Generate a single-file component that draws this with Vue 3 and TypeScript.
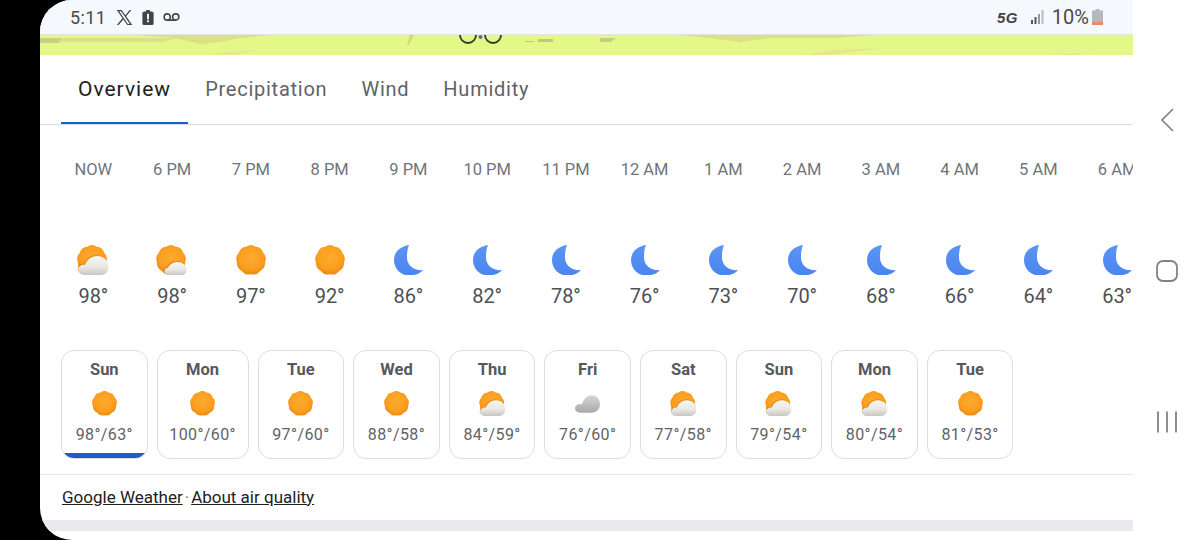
<script setup lang="ts">
interface Hour {
  label: string
  icon: string
  temp: number
}

interface Day {
  name: string
  icon: string
  range: string
}

const tabs = ['Overview', 'Precipitation', 'Wind', 'Humidity']

const hours: Hour[] = [
  { label: 'NOW', icon: 'sun-cloud', temp: 98 },
  { label: '6 PM', icon: 'sun-puff', temp: 98 },
  { label: '7 PM', icon: 'sun', temp: 97 },
  { label: '8 PM', icon: 'sun', temp: 92 },
  { label: '9 PM', icon: 'moon', temp: 86 },
  { label: '10 PM', icon: 'moon', temp: 82 },
  { label: '11 PM', icon: 'moon', temp: 78 },
  { label: '12 AM', icon: 'moon', temp: 76 },
  { label: '1 AM', icon: 'moon', temp: 73 },
  { label: '2 AM', icon: 'moon', temp: 70 },
  { label: '3 AM', icon: 'moon', temp: 68 },
  { label: '4 AM', icon: 'moon', temp: 66 },
  { label: '5 AM', icon: 'moon', temp: 64 },
  { label: '6 AM', icon: 'moon', temp: 63 },
]

const days: Day[] = [
  { name: 'Sun', icon: 'sun', range: '98°/63°' },
  { name: 'Mon', icon: 'sun', range: '100°/60°' },
  { name: 'Tue', icon: 'sun', range: '97°/60°' },
  { name: 'Wed', icon: 'sun', range: '88°/58°' },
  { name: 'Thu', icon: 'sun-cloud', range: '84°/59°' },
  { name: 'Fri', icon: 'cloud', range: '76°/60°' },
  { name: 'Sat', icon: 'sun-cloud', range: '77°/58°' },
  { name: 'Sun', icon: 'sun-cloud', range: '79°/54°' },
  { name: 'Mon', icon: 'sun-cloud', range: '80°/54°' },
  { name: 'Tue', icon: 'sun', range: '81°/53°' },
]

// scalloped disc used by every sun icon, soft lobes around (15,15)
function scallop(lobes: number, tip: number, valley: number): string {
  const step = (Math.PI * 2) / lobes
  const at = (r: number, a: number) =>
    `${(15 + r * Math.cos(a)).toFixed(2)} ${(15 + r * Math.sin(a)).toFixed(2)}`
  let d = `M${at(valley, -Math.PI / 2 - step / 2)}`
  for (let i = 0; i < lobes; i++) {
    const a = -Math.PI / 2 + i * step
    d += `Q${at(tip, a)} ${at(valley, a + step / 2)}`
  }
  return d + 'Z'
}

const sunPath = scallop(9, 16.6, 14.2)

const bigCloud =
  'M7 30C3.500 30 1.500 27.500 1.500 24.800C1.500 21.800 3.800 19.800 6.500 19.800C7 19.800 7.500 19.900 8 20C9.500 15 14 11 20.500 11C26.500 11 31.500 15.500 31.500 22C31.500 26.500 28.500 30 24 30Z'
const smallCloud =
  'M12.500 30C10 30 8.500 28.200 8.500 26.300C8.500 24.300 10 22.800 12 22.800C13.500 19.500 17 17 21.500 17C26.500 17 30.500 20.500 30.500 25C30.500 28 28.500 30 25.500 30Z'
</script>

<template>
  <div class="device">
    <svg class="defs" aria-hidden="true">
      <defs>
        <radialGradient id="sun-fill" cx="50%" cy="42%" r="60%">
          <stop offset="0%" stop-color="#fdab2e" />
          <stop offset="70%" stop-color="#fb9d1e" />
          <stop offset="100%" stop-color="#ec880c" />
        </radialGradient>
        <linearGradient id="cloud-fill" x1="0" y1="0" x2="0" y2="1">
          <stop offset="0%" stop-color="#f8f7f4" />
          <stop offset="60%" stop-color="#e9e7e3" />
          <stop offset="100%" stop-color="#c8c6c1" />
        </linearGradient>
        <linearGradient id="grey-fill" x1="0" y1="0" x2="0" y2="1">
          <stop offset="0%" stop-color="#d6d6d6" />
          <stop offset="100%" stop-color="#a9a9a9" />
        </linearGradient>
        <linearGradient id="moon-fill" x1="0" y1="0" x2="0" y2="1">
          <stop offset="0%" stop-color="#5b95f5" />
          <stop offset="100%" stop-color="#4a84f0" />
        </linearGradient>
        <symbol id="sun" viewBox="-1 0 32 30">
          <path :d="sunPath" fill="url(#sun-fill)" />
        </symbol>
        <symbol id="sun-cloud" viewBox="0 0 32 30">
          <path :d="sunPath" fill="url(#sun-fill)" />
          <path :d="bigCloud" fill="#c96f00" opacity=".45" transform="translate(-1 -1)" />
          <path :d="bigCloud" fill="url(#cloud-fill)" />
        </symbol>
        <symbol id="sun-puff" viewBox="0 0 32 30">
          <path :d="sunPath" fill="url(#sun-fill)" />
          <path :d="smallCloud" fill="#c96f00" opacity=".45" transform="translate(-1 -1)" />
          <path :d="smallCloud" fill="url(#cloud-fill)" />
        </symbol>
        <symbol id="cloud" viewBox="0 0 32 30">
          <path
            d="M7 26C3.500 26 1 23.500 1 20.500C1 17.500 3.500 15.500 7 15.500C8 15.500 9 15.600 9.500 15.800C11 10 15 5 21 5C27 5 31 10 31 15.500C31 21.500 27 26 21 26Z"
            fill="url(#grey-fill)"
          />
        </symbol>
        <symbol id="moon" viewBox="0 0 32 30">
          <path
            d="M17 0C8 1.500 2 7 2 15C2 24 9 30.500 17.500 30.500C23 30.500 28 28.500 31 25C23 26 15 21 15 12.500C15 7.500 15.500 3.500 17 0Z"
            fill="url(#moon-fill)"
          />
        </symbol>
      </defs>
    </svg>

    <div class="screen">
      <main class="content">
        <header class="status">
          <div class="status-left">
            <span class="clock">5:11</span>
            <svg class="st-x" viewBox="0 0 24 24">
              <path
                d="M1 1.500h7l5.200 7.200 6-7.200h2.500l-7.400 8.800L23 22.500h-7l-5.700-7.800-6.600 7.800H1.200l7.900-9.400ZM4.400 3l12.400 18h2.900L7.200 3Z"
                fill="#444"
                fill-rule="evenodd"
              />
            </svg>
            <svg class="st-alert" viewBox="0 0 12 16">
              <path d="M4 0h4v1.500h2a2 2 0 0 1 2 2V14a2 2 0 0 1-2 2H2a2 2 0 0 1-2-2V3.500a2 2 0 0 1 2-2h2Z" fill="#444" />
              <rect x="5" y="4" width="2" height="6" fill="#f5f8fd" />
              <rect x="5" y="11" width="2" height="2" fill="#f5f8fd" />
            </svg>
            <svg class="st-vm" viewBox="0 0 18 10">
              <circle cx="4.500" cy="5" r="3.300" fill="none" stroke="#444" stroke-width="1.700" />
              <circle cx="13.500" cy="5" r="3.300" fill="none" stroke="#444" stroke-width="1.700" />
              <path d="M4.500 8.300h9" stroke="#444" stroke-width="1.700" />
            </svg>
          </div>
          <div class="status-right">
            <span class="net">5G</span>
            <svg class="st-signal" viewBox="0 0 14 14">
              <rect x="0" y="10" width="2" height="4" fill="#555" />
              <rect x="3.500" y="7" width="2" height="7" fill="#555" />
              <rect x="7" y="4" width="2" height="10" fill="#999" />
              <rect x="10.500" y="0" width="2" height="14" fill="#bbb" />
            </svg>
            <span class="pct">10%</span>
            <svg class="st-batt" viewBox="0 0 11 16">
              <path d="M3.500 0h4v1.500H11V16H0V1.500h3.500Z" fill="#b6b8bb" />
              <rect x="0" y="13" width="11" height="3" fill="#ec8a68" />
            </svg>
          </div>
        </header>

        <div class="banner">
          <svg class="banner-art" viewBox="0 0 1093 20" preserveAspectRatio="none">
            <path d="M0 3h22l-3 5H0Z" fill="#b3b377" opacity=".55" />
            <path d="M22 3h115l-15 4H18Z" fill="#d4d78a" opacity=".7" />
            <path d="M95 0h135l-30 3-20 4-20 2-25-6Z" fill="#d5d184" opacity=".65" />
            <path d="M170 19l48-4-25 5Z" fill="#eed58a" opacity=".6" />
            <path d="M370 0h4l-5 10h-2Z" fill="#c2c27e" opacity=".6" />
            <path d="M485 6h9v1h-9ZM498 4h15v3h-15Z" fill="#b9b978" opacity=".8" />
            <path d="M640 0H835l-40 3H730L700 7 670 3Z" fill="#d5d184" opacity=".65" />
            <path d="M560 3h16l-5 4h-11Z" fill="#b3b377" opacity=".6" />
            <path d="M765 20l28-5 50-2-30 4-25 3Z" fill="#eed58a" opacity=".55" />
            <path d="M1010 20l30-2 18-4-22 6Z" fill="#eed58a" opacity=".55" />
            <path d="M420 0a8 8 0 0 0 16 0" fill="none" stroke="#2d3a2e" stroke-width="1.800" />
            <path d="M445 0a8 8 0 0 0 16 0" fill="none" stroke="#2d3a2e" stroke-width="1.800" />
            <circle cx="440.500" cy="2" r="2" fill="#54708a" />
          </svg>
        </div>

        <nav class="tabs">
          <div
            v-for="(tab, i) in tabs"
            :key="tab"
            class="tab"
            :class="{ active: i === 0 }"
          >
            {{ tab }}
          </div>
        </nav>

        <section class="hours">
          <div v-for="h in hours" :key="h.label" class="hour">
            <span class="hour-label">{{ h.label }}</span>
            <svg class="hour-icon"><use :href="'#' + h.icon" /></svg>
            <span class="hour-temp">{{ h.temp }}°</span>
          </div>
        </section>

        <section class="days">
          <div
            v-for="(d, i) in days"
            :key="i"
            class="day"
            :class="{ wide: d.range.length > 7 }"
          >
            <span class="day-name">{{ d.name }}</span>
            <svg class="day-icon"><use :href="'#' + d.icon" /></svg>
            <span class="day-range">{{ d.range }}</span>
            <span v-if="i === 0" class="day-bar"></span>
          </div>
        </section>

        <footer class="foot">
          <a class="link">Google Weather</a>
          <span class="sep">·</span>
          <a class="link">About air quality</a>
        </footer>
        <div class="band"></div>
      </main>

      <aside class="softkeys">
        <svg class="key" viewBox="0 0 24 24">
          <path d="M18 1 7 12l11 11" fill="none" stroke="#828282" stroke-width="1.700" />
        </svg>
        <svg class="key" viewBox="0 0 24 24">
          <rect x="2" y="2" width="20" height="20" rx="6" fill="none" stroke="#828282" stroke-width="1.800" />
        </svg>
        <svg class="key" viewBox="0 0 24 24">
          <path d="M3 1.500v21M12 1.500v21M21 1.500v21" fill="none" stroke="#828282" stroke-width="1.800" />
        </svg>
      </aside>
    </div>
  </div>
</template>

<style>
html,
body {
  margin: 0;
  background: #000;
}
</style>

<style scoped>
.device {
  width: 1200px;
  height: 540px;
  overflow: hidden;
  background: #000;
  font-family: Roboto, 'Liberation Sans', sans-serif;
  color: #444;
}

.defs {
  position: absolute;
  width: 0;
  height: 0;
}

.screen {
  display: flex;
  height: 540px;
  margin-left: 40px;
  overflow: hidden;
  background: #fff;
  border-radius: 32px 0 0 32px;
}

.content {
  flex: 0 0 1093px;
  width: 1093px;
  display: flex;
  flex-direction: column;
  overflow: hidden;
}

.status {
  flex: 0 0 34px;
  display: flex;
  align-items: center;
  justify-content: space-between;
  padding: 0 30px 0 30px;
  background: #f5f8fd;
  border-bottom: 1px solid #e2e4e4;
}

.status-left,
.status-right {
  display: flex;
  align-items: center;
}

.clock {
  font-size: 18px;
  letter-spacing: 0.4px;
  color: #4a4a4a;
}

.st-x {
  width: 17px;
  height: 17px;
  margin-left: 10px;
}

.st-alert {
  width: 12px;
  height: 15px;
  margin-left: 9px;
}

.st-vm {
  width: 17px;
  height: 10px;
  margin-left: 9px;
}

.net {
  font: italic 700 15px 'Liberation Sans', sans-serif;
  color: #444;
  letter-spacing: 0.4px;
}

.st-signal {
  width: 14px;
  height: 14px;
  margin-left: 13px;
}

.pct {
  font-size: 20px;
  margin-left: 7px;
  color: #4a4a4a;
}

.st-batt {
  width: 11px;
  height: 16px;
  margin-left: 3px;
}

.banner {
  flex: 0 0 20px;
  background: #e4f887;
  overflow: hidden;
}

.banner-art {
  display: block;
  width: 100%;
  height: 20px;
}

.tabs {
  flex: 0 0 70px;
  box-sizing: border-box;
  display: flex;
  padding-left: 21px;
  border-bottom: 1px solid #dadce0;
}

.tab {
  padding: 0 17px;
  height: 69px;
  box-sizing: border-box;
  line-height: 68px;
  font-size: 20px;
  letter-spacing: 0.75px;
  color: #5f6368;
}

.tab.active {
  font-size: 21px;
  letter-spacing: 1px;
  color: #202124;
  border-bottom: 2px solid #1a5fc4;
}

.hours {
  display: flex;
  padding: 34px 0 0 14px;
}

.hour {
  flex: 0 0 78.750px;
  display: flex;
  flex-direction: column;
  align-items: center;
}

.hour-label {
  height: 22px;
  line-height: 22px;
  font-size: 16.500px;
  color: #70757a;
  white-space: nowrap;
}

.hour-icon {
  width: 32px;
  height: 30px;
  margin-top: 64px;
}

.hour-temp {
  height: 24px;
  line-height: 24px;
  margin-top: 9px;
  font-size: 20px;
  color: #4d5156;
}

.days {
  display: flex;
  gap: 9px;
  padding: 42px 0 0 21px;
}

.day {
  position: relative;
  flex: 0 0 86.600px;
  height: 109px;
  box-sizing: border-box;
  display: flex;
  flex-direction: column;
  align-items: center;
  border: 1.500px solid #dcdde0;
  border-radius: 13px;
  overflow: hidden;
}

.day.wide {
  flex-basis: 92px;
}

.day-name {
  height: 20px;
  line-height: 20px;
  margin-top: 9px;
  font-size: 16.500px;
  font-weight: 700;
  color: #55595e;
}

.day-icon {
  width: 27px;
  height: 25px;
  margin-top: 11px;
}

.day-range {
  height: 20px;
  line-height: 20px;
  margin-top: 9px;
  font-size: 16px;
  letter-spacing: 0.4px;
  color: #5f6368;
  white-space: nowrap;
}

.day-bar {
  position: absolute;
  left: 0;
  right: 0;
  bottom: 0;
  height: 5px;
  background: #1a5fc4;
  border-radius: 0 0 8px 8px;
}

.foot {
  flex: 0 0 46px;
  margin-top: 15px;
  box-sizing: border-box;
  display: flex;
  align-items: center;
  gap: 1px;
  padding: 0 0 2px 22px;
  border-top: 1px solid #e8eaed;
  font-size: 17px;
  color: #202124;
}

.link {
  text-decoration: underline;
}

.sep {
  color: #70757a;
  padding: 0 1px;
}

.band {
  flex: 0 0 11px;
  background: #e8eaed;
}

.softkeys {
  flex: 1;
  display: flex;
  flex-direction: column;
  align-items: center;
  gap: 127px;
  padding-top: 108px;
}

.key {
  width: 24px;
  height: 24px;
}
</style>
